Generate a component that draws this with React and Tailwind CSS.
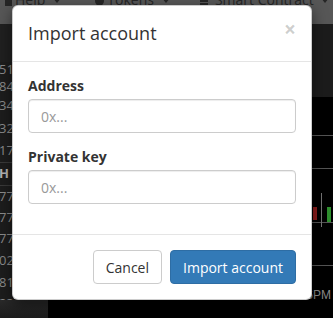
import React from "react";

const rows = [
  { t: "51.02", h: "h-[16px]" },
  { t: "840.1", h: "h-[17px]" },
  { t: "340.5", h: "h-[22px]" },
  { t: "320.8", h: "h-[23px]" },
  { t: "170.3", h: "h-[23px]", b: true },
  { t: "H", h: "h-[23px]", bold: true, b: true },
  { t: "77.12", h: "h-[21px]" },
  { t: "77.40", h: "h-[21px]" },
  { t: "77.55", h: "h-[22px]" },
  { t: "02.31", h: "h-[22px]" },
  { t: "81.90", h: "h-[21px]" },
  { t: "23.44", h: "h-[21px]" },
];

function Caret() {
  return (
    <svg width="8" height="6" viewBox="0 0 8 6" className="mt-[5px]">
      <path d="M0 0 L8 0 L4 5 Z" fill="#262626" />
    </svg>
  );
}

export default function App() {
  return (
    <div
      className="relative w-[333px] h-[318px] overflow-hidden bg-black"
      style={{ fontFamily: '"Open Sans", "Liberation Sans", sans-serif' }}
    >
      {/* navbar */}
      <div className="h-[24px] bg-[#575757] flex items-start text-[14px] leading-[14px] text-[#262626]">
        <div className="flex items-start -mt-[7px] ml-[5px]">
          <svg width="7" height="14" viewBox="0 0 7 14" className="mt-[1px]">
            <rect x="0" y="2" width="7" height="10" fill="#262626" />
          </svg>
          <span className="ml-[3px]">Help</span>
          <span className="ml-[8px]"><Caret /></span>
        </div>
        <div className="flex items-start -mt-[7px] ml-[34px]">
          <svg width="9" height="14" viewBox="0 0 9 14" className="mt-[1px]">
            <circle cx="4.5" cy="7" r="4.5" fill="#262626" />
          </svg>
          <span className="ml-[3px]">Tokens</span>
          <span className="ml-[8px]"><Caret /></span>
        </div>
        <div className="flex items-start -mt-[7px] ml-[30px]">
          <svg width="8" height="14" viewBox="0 0 8 14" className="mt-[1px]">
            <rect x="0" y="3" width="8" height="2" fill="#262626" />
            <rect x="0" y="6" width="8" height="2" fill="#262626" />
            <rect x="0" y="9" width="8" height="2" fill="#262626" />
          </svg>
          <span className="ml-[7px]">Smart Contract</span>
          <span className="ml-[7px]"><Caret /></span>
        </div>
      </div>

      {/* page body */}
      <div className="flex h-[276px]">
        <div className="w-[48px] bg-[#1d1d1d] flex flex-col overflow-hidden text-[13px] text-[#8c8c8c]">
          <div className="h-[38px] shrink-0 bg-[#202020]" />
          {rows.map((r, i) => (
            <div
              key={i}
              className={`${r.h} shrink-0 flex items-center -ml-[1px] whitespace-nowrap ${
                r.b ? "border-b border-[#3a3a3a]" : ""
              } ${r.bold ? "font-bold text-[#b5b5b5]" : ""}`}
            >
              {r.t}
            </div>
          ))}
        </div>
        <div className="flex-1 flex flex-col">
          <div className="h-[73px] bg-[#1c1c1c]" />
          <svg width="285" height="203" viewBox="0 0 285 203" className="block overflow-visible">
            <rect width="285" height="203" fill="#000" />
            <line x1="0" y1="38.5" x2="285" y2="38.5" stroke="#555" />
            <line x1="0" y1="71.5" x2="285" y2="71.5" stroke="#555" />
            <line x1="0" y1="125.5" x2="285" y2="125.5" stroke="#555" />
            <line x1="0" y1="168.5" x2="285" y2="168.5" stroke="#555" />
            <line x1="273.5" y1="96" x2="273.5" y2="130" stroke="#777" />
            <rect x="265" y="110" width="4" height="13" fill="#8e1c1c" />
            <rect x="279" y="110" width="4" height="15" fill="#2e8f2e" />
            <text x="180" y="202" fontSize="12" fill="#8a8a8a" textAnchor="end" fontFamily="Liberation Sans, sans-serif">
              Sep 15, 6AM
            </text>
            <text x="238" y="202" fontSize="12" fill="#8a8a8a" textAnchor="end" fontFamily="Liberation Sans, sans-serif">
              12PM
            </text>
            <text x="283" y="202" fontSize="12" fill="#8a8a8a" textAnchor="end" fontFamily="Liberation Sans, sans-serif">
              6PM
            </text>
          </svg>
        </div>
      </div>

      {/* bottom strip */}
      <div className="flex h-[18px]">
        <div className="w-[48px] bg-gradient-to-b from-[#2a2a2a] to-[#1c1c1c]" />
        <div className="flex-1 bg-black" />
      </div>

      {/* modal */}
      <div className="absolute left-[12px] top-[5px] w-[300px] bg-white border border-black/20 rounded-[6px] shadow-[0_5px_15px_rgba(0,0,0,0.5)] text-[#333]">
        <div className="p-[15px] border-b border-[#e5e5e5] flex justify-between items-start">
          <h4 className="text-[18px] leading-[25px] font-normal">Import account</h4>
          <span className="text-[21px] font-bold leading-[21px] -mt-[2px] text-black/20">×</span>
        </div>
        <div className="p-[15px]">
          <div className="mb-[15px]">
            <label className="block text-[14px] font-bold leading-[17px] mb-[5px]">Address</label>
            <input
              className="block w-full h-[34px] px-[12px] text-[14px] border border-[#ccc] rounded-[4px] shadow-[inset_0_1px_1px_rgba(0,0,0,0.075)] placeholder:text-[#999] outline-none"
              placeholder="0x..."
            />
          </div>
          <div className="mb-[15px]">
            <label className="block text-[14px] font-bold leading-[17px] mb-[5px]">Private key</label>
            <input
              className="block w-full h-[34px] px-[12px] text-[14px] border border-[#ccc] rounded-[4px] shadow-[inset_0_1px_1px_rgba(0,0,0,0.075)] placeholder:text-[#999] outline-none"
              placeholder="0x..."
            />
          </div>
        </div>
        <div className="p-[15px] border-t border-[#e5e5e5] flex justify-end gap-[8px]">
          <button className="h-[34px] px-[12px] text-[14px] text-[#333] bg-white border border-[#ccc] rounded-[4px]">
            Cancel
          </button>
          <button className="h-[34px] px-[12px] text-[14px] text-white bg-[#337ab7] border border-[#2e6da4] rounded-[4px]">
            Import account
          </button>
        </div>
      </div>
    </div>
  );
}
